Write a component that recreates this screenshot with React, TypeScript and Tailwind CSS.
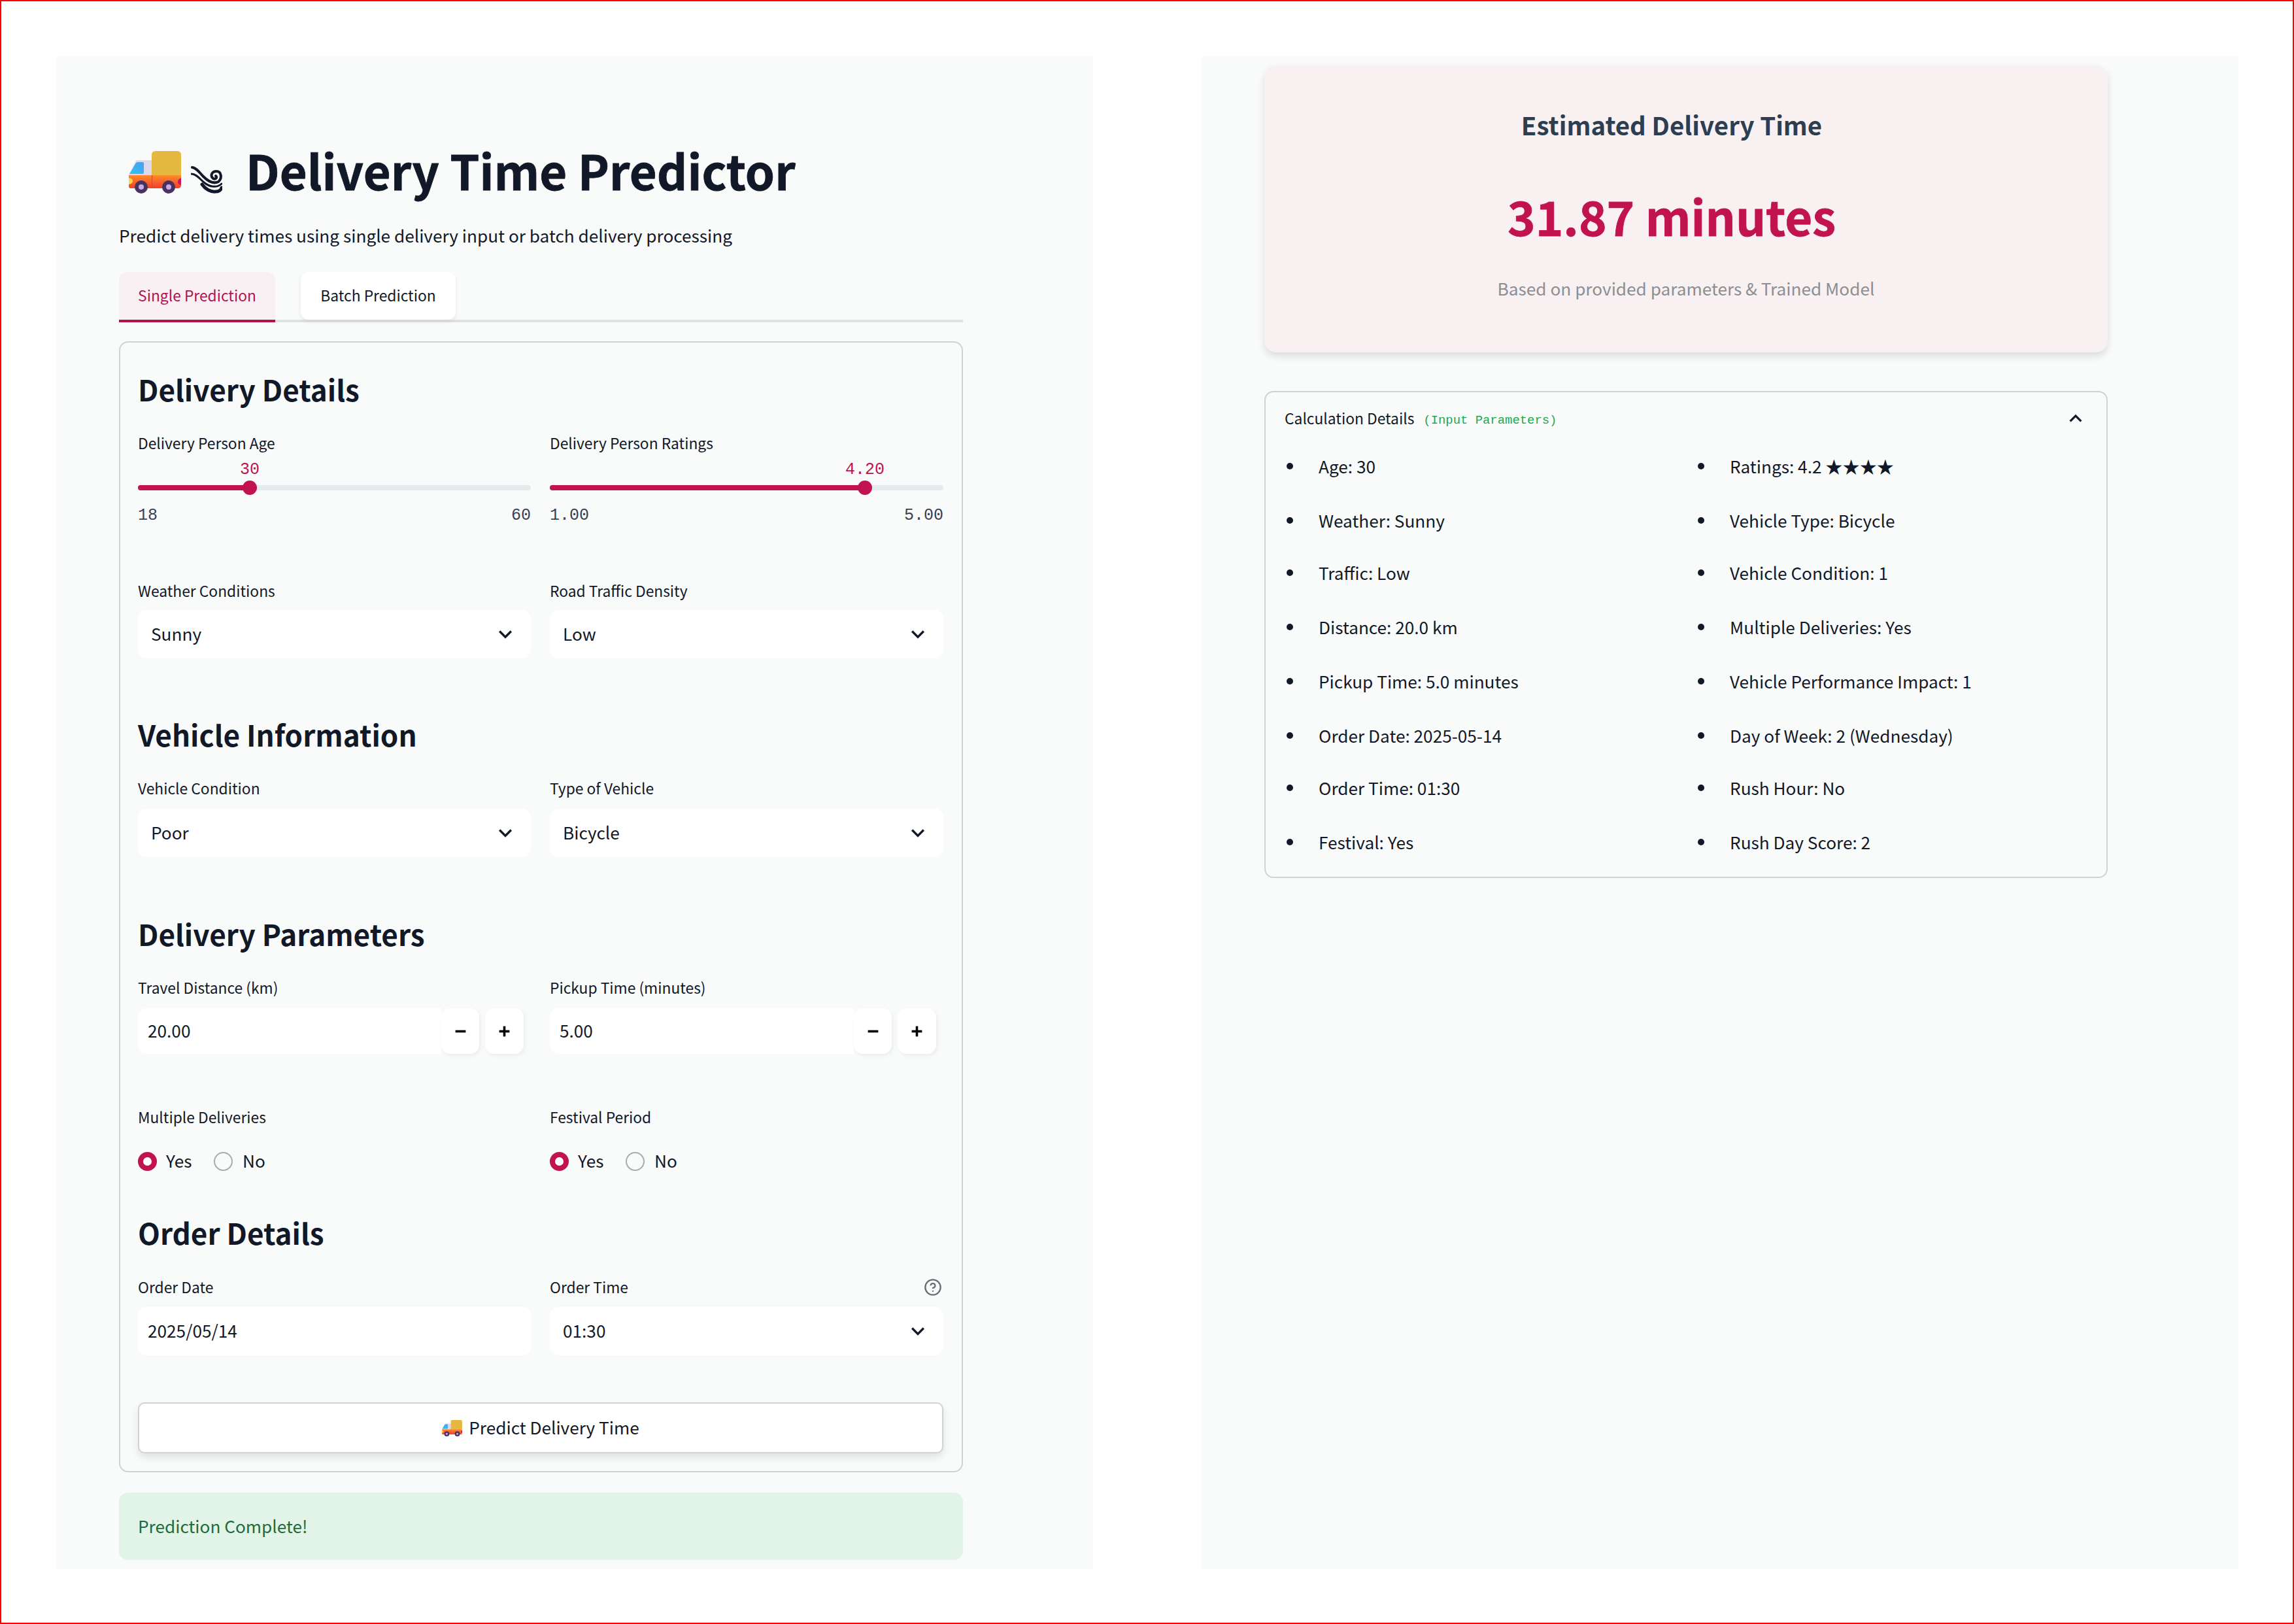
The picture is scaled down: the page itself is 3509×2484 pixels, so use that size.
import { CircleHelp, Minus, Plus } from "lucide-react";

const Truck = ({ className }: { className: string }) => (
  <svg viewBox="0 0 80 65" className={className}>
    <defs>
      <linearGradient id="low" x1="0" y1="0" x2="0" y2="1">
        <stop offset="0" stopColor="#ff8a2a" />
        <stop offset="1" stopColor="#f0402c" />
      </linearGradient>
      <linearGradient id="win" x1="0" y1="1" x2="1" y2="0">
        <stop offset="0" stopColor="#2fc4f2" />
        <stop offset="1" stopColor="#4a9ff0" />
      </linearGradient>
    </defs>
    <path d="M0 37 L11 15 Q12 14 14 14 H36 V38 H0Z" fill="#dfd8ec" />
    <path d="M1 35 L11 18 Q12 17 14 17 H21 Q23 17 23 19 V33 Q23 35 21 35Z" fill="url(#win)" />
    <path d="M35 6 Q35 0 41 0 H74 Q80 0 80 6 V38 H35Z" fill="#e5b940" />
    <path d="M0 37 H80 V52 Q80 57 75 57 H3 Q0 57 0 54Z" fill="url(#low)" />
    <path d="M35 37 H36 V57 H35Z" fill="#d8452a" />
    <path d="M0 41 Q6 42 6 46 Q6 50 0 51Z" fill="#ffd84a" />
    <path d="M80 41 Q75 43 75 47 Q75 51 80 52Z" fill="#c9145f" />
    <circle cx="19" cy="55" r="10" fill="#473260" />
    <circle cx="19" cy="55" r="4" fill="#c9a9e6" />
    <circle cx="61" cy="55" r="10" fill="#473260" />
    <circle cx="61" cy="55" r="4" fill="#c9a9e6" />
  </svg>
);

const Wind = () => (
  <svg viewBox="0 0 48 42" className="h-[42px] w-[48px]" fill="none" stroke="#111827" strokeLinecap="round">
    <path d="M2 2 C9 3 13 10 19 16 C25 22 34 28 42 24 C48 19 47 8 39 8 C32 8 29 15 34 19 C38 21 41 17 38 15" strokeWidth="4" />
    <path d="M1 12 C8 12 13 19 20 25 C28 32 40 34 47 27" strokeWidth="3" />
    <path d="M17 28 C22 35 30 40 38 39 C42 39 46 37 47 33" strokeWidth="5" />
  </svg>
);

const Chevron = ({ up }: { up?: boolean }) => (
  <svg viewBox="0 0 24 24" className={up ? "h-[38px] w-[38px] rotate-180 fill-[#111827]" : "h-[40px] w-[40px] fill-[#111827]"}>
    <path d="M16.59 8.59L12 13.17 7.41 8.59 6 10l6 6 6-6z" />
  </svg>
);

const Label = ({ children }: { children: string }) => (
  <div className="h-[32px] text-[22.8px] leading-[32px] text-[#111827]">{children}</div>
);

const Heading = ({ children, className }: { children: string; className: string }) => (
  <h3 className={`h-[60px] text-[44px] leading-[60px] font-semibold text-[#111827] ${className}`}>{children}</h3>
);

const Select = ({ label, value, gap }: { label: string; value: string; gap: string }) => (
  <div>
    <Label>{label}</Label>
    <div className={`${gap} flex h-[74px] items-center justify-between rounded-[14px] bg-white pr-[19px] pl-[20px] text-[26.2px] text-[#111827]`}>
      <span>{value}</span>
      <Chevron />
    </div>
  </div>
);

const Slider = ({ label, value, min, max, pct }: { label: string; value: string; min: string; max: string; pct: string }) => (
  <div>
    <Label>{label}</Label>
    <div className="mt-[9px] h-[32px] w-full font-['Liberation_Mono',monospace]">
      <div className={pct === "a" ? "ml-[171px] w-0 text-center" : "ml-[482px] w-0 text-center"}>
        <span className="ml-[-40px] block w-[80px] text-[25px] leading-[32px] text-[#c0134f]">{value}</span>
      </div>
    </div>
    <div className="relative mt-[7px] h-[8px] rounded-full bg-[#e4ebec]">
      <div className={pct === "a" ? "h-full w-[171px] rounded-full bg-[#c0134f]" : "h-full w-[482px] rounded-full bg-[#c0134f]"} />
      <div className={pct === "a" ? "absolute top-[-7px] left-[160px] h-[22px] w-[22px] rounded-full bg-[#c0134f]" : "absolute top-[-7px] left-[471px] h-[22px] w-[22px] rounded-full bg-[#c0134f]"} />
    </div>
    <div className="mt-[24px] flex justify-between font-['Liberation_Mono',monospace] text-[25px] leading-[30px] text-[#374151]">
      <span>{min}</span>
      <span>{max}</span>
    </div>
  </div>
);

const NumberInput = ({ label, value }: { label: string; value: string }) => (
  <div>
    <Label>{label}</Label>
    <div className="mt-[15px] flex h-[70px] pr-[11px]">
      <div className="flex flex-1 items-center rounded-l-[14px] bg-white pl-[15px] text-[26.2px] text-[#111827]">{value}</div>
      <button className="flex h-full w-[58px] items-center justify-center rounded-[14px] bg-white text-black shadow-[2px_3px_6px_rgba(0,0,0,0.06)]">
        <Minus className="h-[27px] w-[27px]" strokeWidth={3.2} strokeLinecap="butt" />
      </button>
      <button className="ml-[9px] flex h-full w-[59px] items-center justify-center rounded-[14px] bg-white text-black shadow-[2px_3px_6px_rgba(0,0,0,0.06)]">
        <Plus className="h-[27px] w-[27px]" strokeWidth={3.2} strokeLinecap="butt" />
      </button>
    </div>
  </div>
);

const Radio = ({ label }: { label: string }) => (
  <div>
    <Label>{label}</Label>
    <div className="mt-[35px] flex h-[32px] items-center text-[26.2px] text-[#111827]">
      <span className="flex h-[29px] w-[29px] items-center justify-center rounded-full bg-[#c0134f]">
        <span className="h-[13px] w-[13px] rounded-full bg-white" />
      </span>
      <span className="ml-[14px] w-[73px]">Yes</span>
      <span className="h-[29px] w-[29px] rounded-full border-2 border-[#a8adb0]" />
      <span className="ml-[15px]">No</span>
    </div>
  </div>
);

const rows: [string, string, string][] = [
  ["mt-0", "Age: 30", "Ratings: 4.2 ★★★★"],
  ["mt-[43px]", "Weather: Sunny", "Vehicle Type: Bicycle"],
  ["mt-[40px]", "Traffic: Low", "Vehicle Condition: 1"],
  ["mt-[43px]", "Distance: 20.0 km", "Multiple Deliveries: Yes"],
  ["mt-[43px]", "Pickup Time: 5.0 minutes", "Vehicle Performance Impact: 1"],
  ["mt-[43px]", "Order Date: 2025-05-14", "Day of Week: 2 (Wednesday)"],
  ["mt-[40px]", "Order Time: 01:30", "Rush Hour: No"],
  ["mt-[43px]", "Festival: Yes", "Rush Day Score: 2"],
];

const Item = ({ text }: { text: string }) => (
  <div className="flex h-[40px] w-[629px] shrink-0 items-center text-[26.2px] leading-[40px] text-[#111827]">
    <span className="ml-[3px] h-[10px] w-[10px] rounded-full bg-[#111827]" />
    <span className="ml-[39px]">{text}</span>
  </div>
);

export default function App() {
  return (
    <div className="box-border flex h-[2484px] w-[3509px] gap-[166px] border-2 border-[#ff0000] bg-white pt-[84px] pl-[84px] font-['Noto_Sans_CJK_SC',sans-serif]">
      <main className="h-[2314px] w-[1586px] bg-[#f9fbfb] pl-[96px]">
        <div className="w-[1291px]">
          <div className="mt-[129px] flex h-[90px] items-center">
            <div className="mt-[6px] ml-[15px] flex items-end">
              <Truck className="h-[65px] w-[80px]" />
              <span className="ml-[15px]"><Wind /></span>
            </div>
            <h1 className="ml-[36px] text-[72.4px] leading-[90px] font-bold text-[#111827] [-webkit-text-stroke:0.8px_#111827]">Delivery Time Predictor</h1>
          </div>
          <p className="mt-[35px] h-[40px] text-[26.2px] leading-[40px] text-[#111827]">
            Predict delivery times using single delivery input or batch delivery processing
          </p>
          <div className="mt-[36px] flex h-[77px] border-b-4 border-[#e0e2e4]">
            <div className="mb-[-4px] flex h-[77px] w-[239px] items-center justify-center rounded-t-[12px] border-b-4 border-[#b0144f] bg-[#f9f0f3] text-[22.8px] text-[#b0144f]">
              Single Prediction
            </div>
            <div className="mb-[-4px] ml-[39px] flex h-[73px] w-[237px] items-center justify-center rounded-[12px] bg-white text-[22.8px] text-[#111827] shadow-[0_3px_6px_rgba(0,0,0,0.08)]">
              Batch Prediction
            </div>
          </div>
          <section className="mt-[29px] box-border h-[1730px] w-[1291px] rounded-[14px] border-2 border-[#d0d3d6] pt-[41px] pr-[28px] pl-[27px]">
            <Heading className="">Delivery Details</Heading>
            <div className="mt-[37px] grid grid-cols-[601px_602px] gap-x-[29px]">
              <Slider label="Delivery Person Age" value="30" min="18" max="60" pct="a" />
              <Slider label="Delivery Person Ratings" value="4.20" min="1.00" max="5.00" pct="b" />
            </div>
            <div className="mt-[84px] grid grid-cols-[601px_602px] gap-x-[29px]">
              <Select label="Weather Conditions" value="Sunny" gap="mt-[13px]" />
              <Select label="Road Traffic Density" value="Low" gap="mt-[13px]" />
            </div>
            <Heading className="mt-[86px]">Vehicle Information</Heading>
            <div className="mt-[37px] grid grid-cols-[601px_602px] gap-x-[29px]">
              <Select label="Vehicle Condition" value="Poor" gap="mt-[15px]" />
              <Select label="Type of Vehicle" value="Bicycle" gap="mt-[15px]" />
            </div>
            <Heading className="mt-[87px]">Delivery Parameters</Heading>
            <div className="mt-[37px] grid grid-cols-[601px_602px] gap-x-[29px]">
              <NumberInput label="Travel Distance (km)" value="20.00" />
              <NumberInput label="Pickup Time (minutes)" value="5.00" />
            </div>
            <div className="mt-[81px] grid grid-cols-[601px_602px] gap-x-[29px]">
              <Radio label="Multiple Deliveries" />
              <Radio label="Festival Period" />
            </div>
            <Heading className="mt-[63px]">Order Details</Heading>
            <div className="mt-[38px] grid grid-cols-[601px_602px] gap-x-[29px]">
              <div>
                <Label>Order Date</Label>
                <div className="mt-[14px] flex h-[74px] items-center rounded-[14px] bg-white pl-[15px] text-[26.2px] text-[#111827]">2025/05/14</div>
              </div>
              <div>
                <div className="flex items-center justify-between pr-[2px]">
                  <Label>Order Time</Label>
                  <CircleHelp className="h-[28px] w-[28px] text-[#6a6f76]" strokeWidth={2} />
                </div>
                <div className="mt-[14px] flex h-[74px] items-center justify-between rounded-[14px] bg-white pr-[19px] pl-[20px] text-[26.2px] text-[#111827]">
                  <span>01:30</span>
                  <Chevron />
                </div>
              </div>
            </div>
            <button className="mt-[72px] box-border flex h-[78px] w-[1232px] items-center justify-center rounded-[10px] border-2 border-[#d0d3d6] bg-white text-[26.2px] text-[#111827] shadow-[0_6px_12px_rgba(0,0,0,0.1)]">
              <Truck className="h-[25px] w-[31px]" />
              <span className="ml-[10px]">Predict Delivery Time</span>
            </button>
          </section>
          <div className="mt-[31px] flex h-[103px] items-center rounded-[14px] bg-[#e2f3e7] pl-[29px] text-[26.2px] text-[#1e6b3b]">
            Prediction Complete!
          </div>
        </div>
      </main>
      <aside className="h-[2314px] w-[1586px] bg-[#f9fbfb] pt-[14px] pl-[96px]">
        <div className="box-border h-[439px] w-[1290px] rounded-[18px] bg-[#f9f0f2] pt-[62px] text-center shadow-[0_6px_12px_rgba(0,0,0,0.12)]">
          <h3 className="mr-[44px] text-[38.4px] leading-[56px] font-semibold text-[#2c3e50]">Estimated Delivery Time</h3>
          <div className="mt-[67px] mr-[44px] text-[72.4px] leading-[90px] font-bold text-[#c0134f] [-webkit-text-stroke:0.8px_#c0134f]">31.87 minutes</div>
          <p className="mt-[46px] text-[26.2px] leading-[40px] text-[#8a8f94]">Based on provided parameters &amp; Trained Model</p>
        </div>
        <div className="mt-[59px] box-border h-[745px] w-[1290px] rounded-[14px] border-2 border-[#d0d3d6] pt-[20px] pr-[28px] pl-[29px]">
          <div className="flex h-[40px] items-center justify-between">
            <div className="flex items-center text-[22.8px] text-[#111827]">
              <span>Calculation Details</span>
              <span className="mt-[6px] ml-[14px] font-['Liberation_Mono',monospace] text-[18.9px] text-[#22a650]">(Input Parameters)</span>
            </div>
            <Chevron up />
          </div>
          <div className="mt-[33px]">
            {rows.map(([gap, a, b]) => (
              <div key={a} className={`flex ${gap}`}>
                <Item text={a} />
                <Item text={b} />
              </div>
            ))}
          </div>
        </div>
      </aside>
    </div>
  );
}
